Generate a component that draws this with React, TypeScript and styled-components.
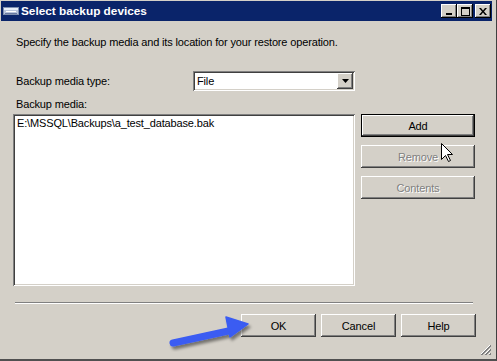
import styled, { createGlobalStyle } from "styled-components";

const GlobalStyle = createGlobalStyle`
	html, body {
		margin: 0;
		padding: 0;
		background: #d4d0c8;
	}
	body {
		font-family: "Liberation Sans", Arial, sans-serif;
		font-size: 11px;
		color: #000;
	}
`;

const raised = `
	box-shadow: inset -1px -1px #404040, inset 1px 1px #ffffff,
		inset -2px -2px #808080, inset 2px 2px #d4d0c8;
`;

const sunken = `
	box-shadow: inset 1px 1px #808080, inset -1px -1px #ffffff,
		inset 2px 2px #404040, inset -2px -2px #d4d0c8;
`;

const Window = styled.div`
	position: relative;
	width: 497px;
	height: 361px;
	box-sizing: border-box;
	background: #d4d0c8;
	padding: 1px 4px 0 1px;
	border-right: 1px solid #404040;
	border-bottom: 2px solid #505050;
	display: flex;
	flex-direction: column;
	overflow: hidden;
`;

const TitleBar = styled.div`
	height: 20px;
	background: #0a246a;
	display: flex;
	align-items: center;
	padding: 0 1px 0 2px;
	flex-shrink: 0;
`;

const TitleText = styled.span`
	flex: 1;
	margin-left: 2px;
	color: #fff;
	font-weight: bold;
	font-size: 11.8px;
`;

const TitleButton = styled.div<{ $gap?: boolean }>`
	width: 16px;
	height: 14px;
	margin-left: ${(p) => (p.$gap ? "2px" : "0")};
	background: #d4d0c8;
	display: flex;
	align-items: center;
	justify-content: center;
	box-shadow: inset -1px -1px #000, inset 1px 1px #ffffff,
		inset -2px -2px #808080, inset 2px 2px #d4d0c8;
`;

const Body = styled.div`
	flex: 1;
	display: flex;
	flex-direction: column;
	padding: 0 16px 0 12px;
	letter-spacing: -0.15px;
`;

const Intro = styled.div`
	margin-top: 15px;
	padding-left: 3px;
	line-height: 13px;
`;

const FormRow = styled.div`
	margin-top: 22px;
	display: flex;
	align-items: center;
`;

const Label = styled.div<{ $width?: number }>`
	box-sizing: border-box;
	padding-left: 3px;
	line-height: 13px;
	width: ${(p) => (p.$width ? `${p.$width}px` : "auto")};
	flex-shrink: 0;
`;

const Combo = styled.div`
	width: 162px;
	height: 20px;
	box-sizing: border-box;
	background: #fff;
	${sunken}
	display: flex;
	align-items: center;
	padding: 2px;
`;

const ComboValue = styled.span`
	flex: 1;
	padding-left: 2px;
`;

const ComboButton = styled.div`
	width: 16px;
	height: 16px;
	background: #d4d0c8;
	${raised}
	display: flex;
	align-items: center;
	justify-content: center;
`;

const MediaLabel = styled(Label)`
	margin-top: 7px;
`;

const MediaRow = styled.div`
	margin-top: 3px;
	display: flex;
	gap: 6px;
`;

const ListBox = styled.div`
	width: 342px;
	height: 172px;
	box-sizing: border-box;
	background: #fff;
	${sunken}
	padding: 3px 4px;
	line-height: 13px;
`;

const ButtonColumn = styled.div`
	display: flex;
	flex-direction: column;
	gap: 8px;
`;

const Button = styled.div<{ $width: number; $focused?: boolean; $disabled?: boolean }>`
	width: ${(p) => p.$width}px;
	height: 23px;
	box-sizing: border-box;
	background: #d4d0c8;
	display: flex;
	align-items: center;
	justify-content: center;
	color: ${(p) => (p.$disabled ? "#808080" : "#000")};
	text-shadow: ${(p) => (p.$disabled ? "1px 1px #ffffff" : "none")};
	${(p) =>
		p.$focused
			? `box-shadow: inset 0 0 0 1px #000, inset -2px -2px #404040, inset 2px 2px #ffffff, inset -3px -3px #808080;`
			: raised}
`;

const Separator = styled.div`
	margin: 16px 0 0 2px;
	width: 458px;
	height: 1px;
	background: #808080;
	border-bottom: 1px solid #ffffff;
`;

const Footer = styled.div`
	margin-top: 10px;
	display: flex;
	justify-content: flex-end;
	gap: 5px;
`;

const Grip = styled.svg`
	position: absolute;
	right: 5px;
	bottom: 4px;
`;

const Overlay = styled.svg`
	position: absolute;
	pointer-events: none;
`;

function DriveIcon() {
	return (
		<svg width="16" height="8" viewBox="0 0 16 8">
			<rect x="0.5" y="0.5" width="15" height="7" fill="#b8c4dc" stroke="#8090b0" />
			<rect x="1" y="1" width="14" height="2" fill="#e8eef8" />
			<line x1="3" y1="4.5" x2="13" y2="4.5" stroke="#ffffff" />
			<line x1="2" y1="6.5" x2="14" y2="6.5" stroke="#6878a0" />
		</svg>
	);
}

export default function App() {
	return (
		<>
			<GlobalStyle />
			<Window>
				<TitleBar>
					<DriveIcon />
					<TitleText>Select backup devices</TitleText>
					<TitleButton>
						<svg width="8" height="8" viewBox="0 0 8 8">
							<rect x="1" y="6" width="6" height="2" fill="#000" />
						</svg>
					</TitleButton>
					<TitleButton>
						<svg width="9" height="9" viewBox="0 0 9 9">
							<rect x="0.5" y="0.5" width="8" height="8" fill="none" stroke="#000" />
							<rect x="0" y="0" width="9" height="2" fill="#000" />
						</svg>
					</TitleButton>
					<TitleButton $gap>
						<svg width="8" height="7" viewBox="0 0 8 7">
							<path d="M0 0h2l2 2.5L6 0h2L5 3.5 8 7H6L4 4.5 2 7H0l3-3.5z" fill="#000" />
						</svg>
					</TitleButton>
				</TitleBar>
				<Body>
					<Intro>Specify the backup media and its location for your restore operation.</Intro>
					<FormRow>
						<Label $width={180}>Backup media type:</Label>
						<Combo>
							<ComboValue>File</ComboValue>
							<ComboButton>
								<svg width="7" height="4" viewBox="0 0 7 4">
									<path d="M0 0h7L3.5 4z" fill="#000" />
								</svg>
							</ComboButton>
						</Combo>
					</FormRow>
					<MediaLabel>Backup media:</MediaLabel>
					<MediaRow>
						<ListBox>E:\MSSQL\Backups\a_test_database.bak</ListBox>
						<ButtonColumn>
							<Button $width={114} $focused>Add</Button>
							<Button $width={114} $disabled>Remove</Button>
							<Button $width={114} $disabled>Contents</Button>
						</ButtonColumn>
					</MediaRow>
					<Separator />
					<Footer>
						<Button $width={75}>OK</Button>
						<Button $width={75}>Cancel</Button>
						<Button $width={75}>Help</Button>
					</Footer>
				</Body>
				<Grip width="11" height="11" viewBox="0 0 11 11">
					<path d="M10 1L1 10M10 5L5 10M10 9L9 10" stroke="#ffffff" />
					<path d="M11 1L1 11M11 2L2 11M11 5L5 11M11 6L6 11M11 9L9 11M11 10L10 11" stroke="#808080" />
				</Grip>
				<Overlay width="95" height="45" viewBox="0 0 95 45" style={{ left: 163, top: 307 }}>
					<defs>
						<filter id="sh" x="-20%" y="-40%" width="150%" height="200%">
							<feDropShadow dx="2" dy="3" stdDeviation="1.6" floodColor="#000" floodOpacity="0.45" />
						</filter>
					</defs>
					<g filter="url(#sh)">
						<line x1="10" y1="36" x2="70" y2="23" stroke="#3a5cf2" strokeWidth="7" strokeLinecap="round" />
						<path d="M63 10L85 17L67 30Z" fill="#3a5cf2" stroke="#3a5cf2" strokeWidth="1.5" strokeLinejoin="round" />
					</g>
				</Overlay>
				<Overlay width="13" height="20" viewBox="0 0 13 20" style={{ left: 441, top: 143 }}>
					<path d="M0.5 0.5V16.5L4.5 12.5L7.5 18.5L9.5 17.5L6.5 11.5H11.5Z" fill="#fff" stroke="#000" />
				</Overlay>
			</Window>
		</>
	);
}
